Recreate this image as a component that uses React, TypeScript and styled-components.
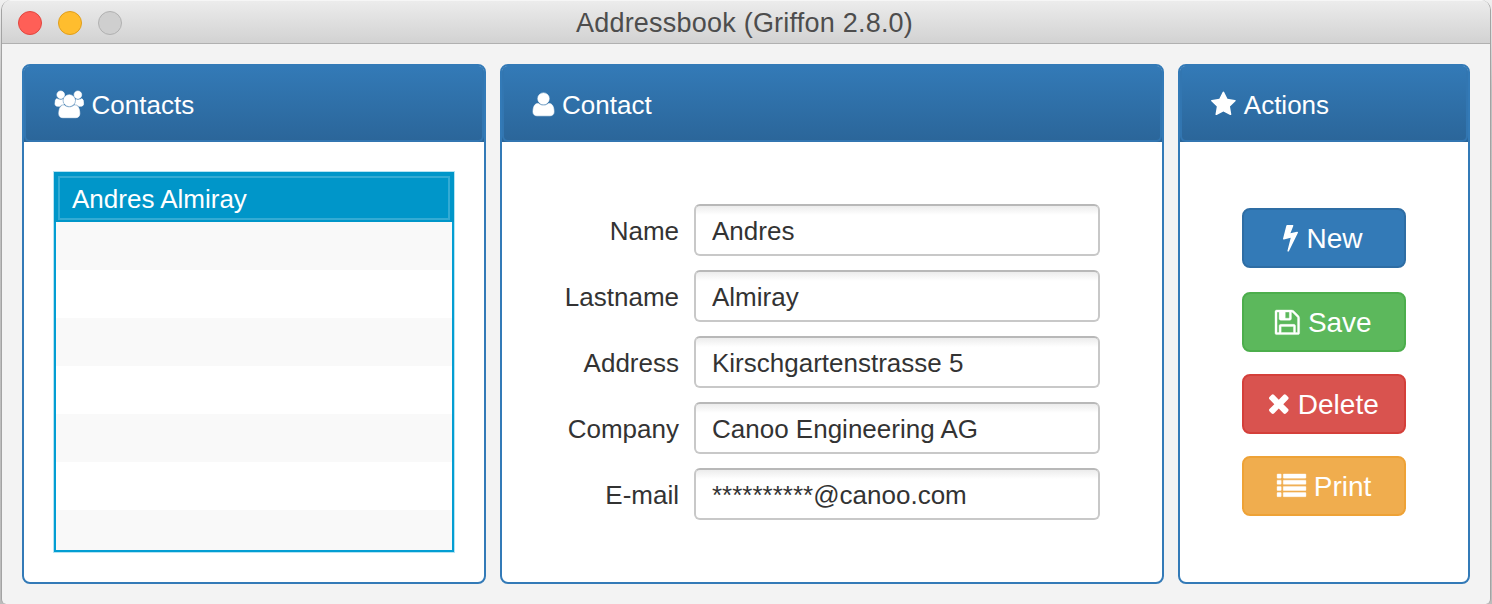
import React from 'react';
import styled, { createGlobalStyle, css } from 'styled-components';

const GlobalStyle = createGlobalStyle`
  * { box-sizing: border-box; }
  body {
    margin: 0;
    background: linear-gradient(#f0f0f0, #c0c0c0 90px, #bcbcbc 604px);
    font-family: "Liberation Sans", Arial, Helvetica, sans-serif;
    font-size: 26px;
    color: #333;
  }
`;

const Window = styled.div`
  width: 1490px;
  height: 604px;
  margin-left: 1px;
  display: flex;
  flex-direction: column;
  background: #f3f3f3;
  border: solid #a3a3a3;
  border-width: 0 1px;
  border-radius: 10px 10px 5px 5px;
  overflow: hidden;
`;

const TitleBar = styled.header`
  height: 44px;
  flex: none;
  display: grid;
  grid-template-columns: 200px 1fr 203px;
  align-items: center;
  background: linear-gradient(#ececec, #d2d2d2);
  border-top: 1px solid #f6f6f6;
  border-bottom: 1px solid #b0b0b0;
`;

const Lights = styled.div`
  display: flex;
  gap: 16px;
  padding-left: 16px;
`;

const Light = styled.span<{ $fill: string; $ring: string }>`
  width: 24px;
  height: 24px;
  border-radius: 50%;
  background: ${(p) => p.$fill};
  border: 1px solid ${(p) => p.$ring};
`;

const Title = styled.h1`
  margin: 0;
  padding-top: 1px;
  font-size: 27px;
  font-weight: 400;
  line-height: 42px;
  text-align: center;
  letter-spacing: 0.22px;
  color: #4d4d4d;
`;

const Content = styled.main`
  flex: 1;
  display: grid;
  grid-template-columns: 464px 664px 292px;
  gap: 14px;
  padding: 20px 20px 20px;
`;

const PanelBox = styled.section`
  display: flex;
  flex-direction: column;
  background: #fff;
  border: 2px solid #337ab7;
  border-radius: 8px;
  overflow: hidden;
`;

const PanelHeader = styled.h2`
  flex: none;
  height: 76px;
  margin: 0;
  padding: 2px 0 0 29px;
  display: flex;
  align-items: center;
  gap: 8px;
  font-size: 26px;
  font-weight: 400;
  color: #fff;
  background: linear-gradient(#337ab7, #2b669a);
  border: solid #3276b1;
  border-width: 0 2px 2px;
  border-radius: 0 0 6px 6px;
`;

const HeaderText = styled.span`
  padding-top: 2px;
`;

const HeaderBack = styled.div`
  flex: none;
  background: linear-gradient(#337ab7, #2b669a);
`;

const ContactList = styled.ul`
  list-style: none;
  width: 400px;
  height: 380px;
  margin: 30px 0 0 30px;
  padding: 0;
  border: 2px solid #039ed3;
  border-top-width: 0;
  box-shadow: 0 0 0 1px #b5e3f2;
`;

const ContactRow = styled.li<{ $selected?: boolean }>`
  height: 48px;
  &:nth-child(even) { background: #f9f9f9; }
  &:last-child { height: 40px; }
  ${(p) =>
    p.$selected &&
    css`
      height: 50px;
      margin: 0 -2px;
      color: #fff;
      background: #0096c9;
      border: solid #0096c9;
      border-width: 4px 4px 2px;
    `}
`;

const ContactName = styled.span`
  display: block;
  height: 44px;
  padding-left: 12px;
  line-height: 43px;
  border: 2px solid #33abd4;
`;

const Form = styled.form`
  display: grid;
  grid-template-columns: 177px 406px;
  grid-auto-rows: 52px;
  row-gap: 14px;
  column-gap: 15px;
  margin-top: 62px;
`;

const Label = styled.label`
  text-align: right;
  line-height: 54px;
`;

const Field = styled.input`
  width: 406px;
  height: 52px;
  margin: 0;
  padding: 2px 16px 0;
  font: inherit;
  color: #333;
  outline: 0;
  background: linear-gradient(#ececec, #fff 9px);
  background-clip: padding-box;
  border: 2px solid #c8c8c8;
  border-top-color: #b8b8b8;
  border-radius: 6px;
`;

const ActionList = styled.div`
  display: flex;
  flex-direction: column;
  align-items: center;
  gap: 22px;
  padding: 66px 0 0;
`;

const ActionButton = styled.button<{ $bg: string; $edge: string; $offset?: number; $gap?: number; $trail?: number }>`
  width: 164px;
  height: 60px;
  margin: 0 0 ${(p) => p.$offset ?? 0}px;
  padding: 0 ${(p) => p.$trail ?? 0}px 0 0;
  display: flex;
  align-items: center;
  justify-content: center;
  gap: ${(p) => p.$gap ?? 8}px;
  font: inherit;
  font-size: 28px;
  color: #fff;
  background: ${(p) => p.$bg};
  border: 2px solid ${(p) => p.$edge};
  border-radius: 8px;
`;

const ActionText = styled.span`
  padding-top: 1px;
`;

const Glyph = styled.svg<{ $w: number; $h: number; $up?: number; $stroke?: number }>`
  flex: none;
  display: block;
  overflow: visible;
  width: ${(p) => p.$w}px;
  height: ${(p) => p.$h}px;
  margin-bottom: ${(p) => p.$up ?? 0}px;
  fill: currentColor;
  stroke: currentColor;
  stroke-width: ${(p) => p.$stroke ?? 0};
`;

const UsersIcon = () => (
  <Glyph $w={28.6} $h={26.7} $stroke={44} viewBox="0 0 1920 1792">
    <path d="M593 896q-162 5-265 128h-134q-82 0-138-40.5t-56-118.5q0-353 124-353 6 0 43.5 21t97.5 42.5 119 21.5q67 0 133-23-5 37-5 66 0 139 81 256zm1071 637q0 120-73 189.5t-194 69.5h-874q-121 0-194-69.5t-73-189.5q0-53 3.5-103.5t14-109 26.5-108.5 43-97.5 62-81 85.5-53.5 111.5-20q10 0 43 21.5t73 48 107 48 135 21.5 135-21.5 107-48 73-48 43-21.5q61 0 111.5 20t85.5 53.5 62 81 43 97.5 26.5 108.5 14 109 3.5 103.5zm-1024-1277q0 106-75 181t-181 75-181-75-75-181 75-181 181-75 181 75 75 181zm704 384q0 159-112.5 271.5t-271.5 112.5-271.5-112.5-112.5-271.5 112.5-271.5 271.5-112.5 271.5 112.5 112.5 271.5zm576 225q0 78-56 118.5t-138 40.5h-134q-103-123-265-128 81-117 81-256 0-29-5-66 66 23 133 23 59 0 119-21.5t97.5-42.5 43.5-21q124 0 124 353zm-128-609q0 106-75 181t-181 75-181-75-75-181 75-181 181-75 181 75 75 181z" />
  </Glyph>
);

const UserIcon = () => (
  <Glyph $w={21} $h={26.7} $stroke={44} viewBox="0 0 1408 1792">
    <g transform="translate(0 1536) scale(1 -1)">
      <path d="M1408 131q0 -120 -73 -189.5t-194 -69.5h-874q-121 0 -194 69.5t-73 189.5q0 53 3.5 103.5t14 109t26.5 108.5t43 97.5t62 81t85.5 53.5t111.5 20q9 0 42 -21.5t74.5 -48t108 -48t133.5 -21.5t133.5 21.5t108 48t74.5 48t42 21.5q61 0 111.5 -20t85.5 -53.5t62 -81t43 -97.5t26.5 -108.5t14 -109t3.5 -103.5zM1088 1024q0 -159 -112.5 -271.5t-271.5 -112.5t-271.5 112.5t-112.5 271.5t112.5 271.5t271.5 112.5t271.5 -112.5t112.5 -271.5z" />
    </g>
  </Glyph>
);

const StarIcon = () => (
  <Glyph $w={24.8} $h={26.7} viewBox="0 0 1664 1792">
    <path d="M1664 647q0 22-26 48l-363 354 86 500q1 7 1 20 0 21-10.5 35.5t-30.5 14.5q-19 0-40-12l-449-236-449 236q-22 12-40 12-21 0-31.5-14.5t-10.5-35.5q0-6 2-20l86-500-364-354q-25-27-25-48 0-37 56-46l502-73 225-455q19-41 49-41t49 41l225 455 502 73q56 9 56 46z" />
  </Glyph>
);

const BoltIcon = () => (
  <Glyph $w={15} $h={26.6} viewBox="0 128 896 1664" preserveAspectRatio="none">
    <path d="M885 566q18 20 7 44l-540 1157q-13 25-42 25-4 0-14-2-17-5-25.5-19t-4.5-30l197-808-406 101q-4 1-12 1-18 0-31-11-18-15-13-39l201-825q4-14 16-23t28-9h328q19 0 32 12.5t13 29.5q0 8-5 18l-171 463 396-98q8-2 12-2 19 0 34 15z" />
  </Glyph>
);

const SaveIcon = () => (
  <Glyph $w={24.6} $h={24.6} $stroke={24} viewBox="128 128 1536 1536">
    <path d="M512 1536h768v-384h-768v384zm896 0h128v-896q0-14-10-38.5t-20-34.5l-281-281q-10-10-34-20t-39-10v416q0 40-28 68t-68 28h-576q-40 0-68-28t-28-68v-416h-128v1280h128v-416q0-40 28-68t68-28h832q40 0 68 28t28 68v416zm-384-928v-320q0-13-9.5-22.5t-22.5-9.5h-192q-13 0-22.5 9.5t-9.5 22.5v320q0 13 9.5 22.5t22.5 9.5h192q13 0 22.5-9.5t9.5-22.5zm640 32v928q0 40-28 68t-68 28h-1344q-40 0-68-28t-28-68v-1344q0-40 28-68t68-28h928q40 0 88 20t76 48l280 280q28 28 48 76t20 88z" />
  </Glyph>
);

const DeleteIcon = () => (
  <Glyph $w={19.6} $h={19.6} viewBox="302 346 1188 1188">
    <path d="M1490 1322q0 40-28 68l-136 136q-28 28-68 28t-68-28l-294-294-294 294q-28 28-68 28t-68-28l-136-136q-28-28-28-68t28-68l294-294-294-294q-28-28-28-68t28-68l136-136q28-28 68-28t68 28l294 294 294-294q28-28 68-28t68 28l136 136q28 28 28 68t-28 68l-294 294 294 294q28 28 28 68z" />
  </Glyph>
);

const ListIcon = () => (
  <Glyph $w={29} $h={22.7} $up={2} $stroke={24} viewBox="0 128 1792 1408">
    {[128, 512, 896, 1280].map((y) => (
      <React.Fragment key={y}>
        <rect x="0" y={y} width="256" height="256" rx="32" />
        <rect x="384" y={y} width="1408" height="256" rx="32" />
      </React.Fragment>
    ))}
  </Glyph>
);

const Panel = ({ icon, title, children }: { icon: React.ReactNode; title: string; children: React.ReactNode }) => (
  <PanelBox>
    <HeaderBack>
      <PanelHeader>
        {icon}
        <HeaderText>{title}</HeaderText>
      </PanelHeader>
    </HeaderBack>
    {children}
  </PanelBox>
);

const fields = [
  ['Name', 'Andres'],
  ['Lastname', 'Almiray'],
  ['Address', 'Kirschgartenstrasse 5'],
  ['Company', 'Canoo Engineering AG'],
  ['E-mail', '**********@canoo.com'],
];

export default function App() {
  return (
    <>
      <GlobalStyle />
      <Window>
        <TitleBar>
          <Lights>
            <Light $fill="#ff5f57" $ring="#e2463f" />
            <Light $fill="#ffbd2e" $ring="#e09e1b" />
            <Light $fill="#cfcfcf" $ring="#b1b1b1" />
          </Lights>
          <Title>Addressbook (Griffon 2.8.0)</Title>
        </TitleBar>
        <Content>
          <Panel icon={<UsersIcon />} title="Contacts">
            <ContactList>
              <ContactRow $selected>
                <ContactName>Andres Almiray</ContactName>
              </ContactRow>
              {Array.from({ length: 7 }, (_, i) => (
                <ContactRow key={i} />
              ))}
            </ContactList>
          </Panel>
          <Panel icon={<UserIcon />} title="Contact">
            <Form>
              {fields.map(([label, value]) => (
                <React.Fragment key={label}>
                  <Label htmlFor={label}>{label}</Label>
                  <Field id={label} defaultValue={value} />
                </React.Fragment>
              ))}
            </Form>
          </Panel>
          <Panel icon={<StarIcon />} title="Actions">
            <ActionList>
              <ActionButton $bg="#337ab7" $edge="#2e6da4" $offset={2} $trail={2}>
                <BoltIcon />
                <ActionText>New</ActionText>
              </ActionButton>
              <ActionButton $bg="#5cb85c" $edge="#4cae4c" $trail={1}>
                <SaveIcon />
                <ActionText>Save</ActionText>
              </ActionButton>
              <ActionButton $bg="#d9534f" $edge="#d43f3a" $gap={9}>
                <DeleteIcon />
                <ActionText>Delete</ActionText>
              </ActionButton>
              <ActionButton $bg="#f0ad4e" $edge="#eea236">
                <ListIcon />
                <ActionText>Print</ActionText>
              </ActionButton>
            </ActionList>
          </Panel>
        </Content>
      </Window>
    </>
  );
}
